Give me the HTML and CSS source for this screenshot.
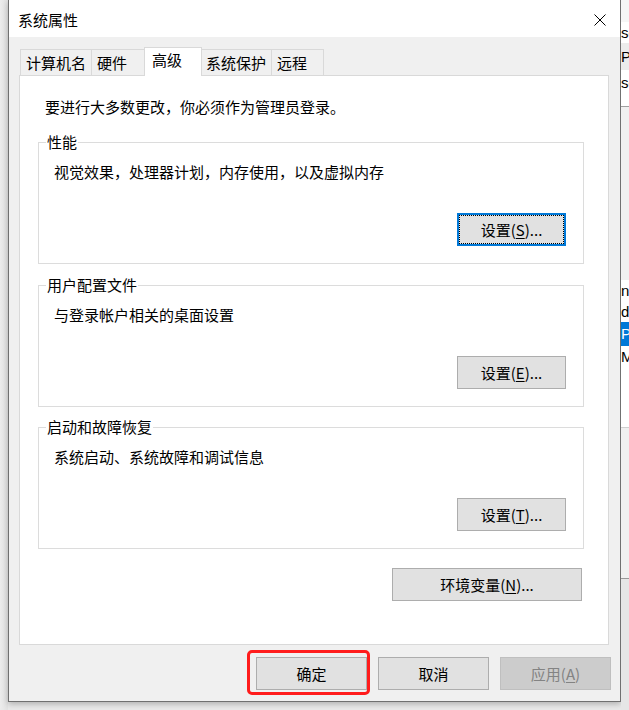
FILE: index.html
```html
<!doctype html>
<html>
	<head>
		<meta charset="utf-8">
		<link rel="stylesheet" href="styles.css">
	</head>
	<body>
		<div class="desk">
			<div class="edge"></div>

			<!-- System properties dialog -->
			<div class="window">
				<div class="titlebar">
					<span class="title">系统属性</span>
					<svg class="close" width="12" height="12" viewBox="0 0 12 12">
						<path d="M0.5 0.5 L11.5 11.5 M11.5 0.5 L0.5 11.5" stroke="#000" stroke-width="1" fill="none"/>
					</svg>
				</div>

				<div class="content">
					<div class="tabs">
						<div class="tab first">计算机名</div>
						<div class="tab prev">硬件</div>
						<div class="tab active">高级</div>
						<div class="tab">系统保护</div>
						<div class="tab">远程</div>
					</div>

					<div class="panel">
						<div class="intro">要进行大多数更改，你必须作为管理员登录。</div>

						<div class="group">
							<span class="legend">性能</span>
							<div class="desc">视觉效果，处理器计划，内存使用，以及虚拟内存</div>
							<div class="actions">
								<button class="btn focus">设置(<u>S</u>)...</button>
							</div>
						</div>

						<div class="group">
							<span class="legend">用户配置文件</span>
							<div class="desc">与登录帐户相关的桌面设置</div>
							<div class="actions">
								<button class="btn">设置(<u>E</u>)...</button>
							</div>
						</div>

						<div class="group last">
							<span class="legend">启动和故障恢复</span>
							<div class="desc">系统启动、系统故障和调试信息</div>
							<div class="actions">
								<button class="btn">设置(<u>T</u>)...</button>
							</div>
						</div>

						<div class="actions env">
							<button class="btn wide">环境变量(<u>N</u>)...</button>
						</div>
					</div>

					<div class="footer">
						<span class="mark"><button class="btn">确定</button></span>
						<button class="btn">取消</button>
						<button class="btn" disabled>应用(<u>A</u>)</button>
					</div>
				</div>
			</div>

			<!-- window behind the dialog, mostly hidden -->
			<div class="behind">
				<div class="b-top"></div>
				<div class="b-line">se</div>
				<div class="b-line shade">Pr</div>
				<div class="b-line tall">se</div>
				<div class="b-gray"></div>
				<div class="b-line">ne</div>
				<div class="b-line">do</div>
				<div class="b-line sel">Pl</div>
				<div class="b-line">M</div>
				<div class="b-white"></div>
				<div class="b-gray2"></div>
				<div class="b-bottom"></div>
			</div>
		</div>
	</body>
</html>
```

FILE: styles.css
```css
body {
	margin: 0;
	background-color: #e9e9e9;
	color: #000;
	font-family: "Noto Sans CJK SC", "Liberation Sans", sans-serif;
	font-size: 15px;
	overflow: hidden;
}
.desk {
	display: flex;
	height: 710px;
}
.edge {
	width: 8px;
	flex: none;
	background: linear-gradient(to right, #ececec, #e2e2e2);
}

/* dialog */
.window {
	width: 613px;
	height: 702px;
	flex: none;
	box-sizing: border-box;
	border: 1px solid #707070;
	border-top: none;
	background-color: #f0f0f0;
	box-shadow: 0 2px 6px rgba(0, 0, 0, 0.25);
	display: flex;
	flex-direction: column;
}
.titlebar {
	height: 37px;
	flex: none;
	background-color: #fff;
	display: flex;
	align-items: center;
	justify-content: space-between;
	padding: 2px 14px 0 9px;
	box-sizing: border-box;
	line-height: 20px;
}
.content {
	padding: 10px 11px 11px 10px;
}

/* tabs */
.tabs {
	display: flex;
	align-items: flex-end;
	padding-left: 1px;
}
.tab {
	height: 26px;
	box-sizing: border-box;
	border-top: 1px solid #d9d9d9;
	border-right: 1px solid #d9d9d9;
	background-color: #f0f0f0;
	line-height: 25px;
	padding-left: 5px;
	white-space: nowrap;
}
.tab.first {
	width: 72px;
	border-left: 1px solid #d9d9d9;
}
.tab.prev {
	width: 52px;
	border-right: none;
}
.tab.active {
	width: 58px;
	height: 29px;
	margin-bottom: -1px;
	border-left: 1px solid #d9d9d9;
	background-color: #fff;
	line-height: 24px;
	padding-left: 7px;
	position: relative;
	z-index: 1;
}
.tab.active + .tab {
	width: 70px;
	padding-left: 4px;
}
.tab:last-child {
	width: 52px;
}

/* tab page */
.panel {
	height: 570px;
	box-sizing: border-box;
	border: 1px solid #d9d9d9;
	background-color: #fff;
	padding-top: 21px;
}
.intro {
	padding-left: 25px;
	line-height: 20px;
}
.group {
	margin: 25px 24px 0 18px;
	border: 1px solid #dcdcdc;
	padding: 0 17px 17px 15px;
}
.group + .group {
	margin-top: 21px;
}
.group.last {
	margin-top: 20px;
}
.legend {
	display: block;
	width: fit-content;
	margin: -11px 0 0 -8px;
	padding: 0 1px;
	background-color: #fff;
	line-height: 20px;
}
.desc {
	margin-top: 10px;
	line-height: 20px;
}
.actions {
	display: flex;
	justify-content: flex-end;
	margin-top: 31px;
}
.actions.env {
	margin: 19px 26px 0 0;
}

/* buttons */
.btn {
	width: 109px;
	height: 33px;
	box-sizing: border-box;
	padding: 0;
	border: 1px solid #adadad;
	border-radius: 0;
	background-color: #e1e1e1;
	color: #000;
	font-family: inherit;
	font-size: 15px;
	line-height: 31px;
	white-space: nowrap;
}
.btn u {
	text-underline-offset: 2px;
}
.btn.focus {
	border: 2px solid #0078d7;
	line-height: 29px;
	outline: 1px dotted #000;
	outline-offset: -3px;
}
.btn.wide {
	width: 190px;
}
.btn:disabled {
	background-color: #cccccc;
	border-color: #bfbfbf;
	color: #838383;
}
.footer {
	display: flex;
	justify-content: flex-end;
	align-items: flex-start;
	gap: 11px;
	margin: 12px -2px 0 0;
}
.footer .btn {
	width: 111px;
}
.mark {
	display: flex;
	border: 3px solid #ff1c1c;
	border-radius: 5px;
	padding: 4px 0 2px 6px;
	margin: -7px -3px -5px -9px;
}

/* the other window peeking out on the right */
.behind {
	flex: 1;
	overflow: hidden;
	display: flex;
	flex-direction: column;
	font-family: "Liberation Sans", sans-serif;
	font-size: 15px;
	white-space: nowrap;
}
.b-top {
	height: 22px;
	background-color: #f6f6f6;
}
.b-line {
	height: 21px;
	line-height: 21px;
	background-color: #fff;
	margin-left: -1px;
	padding-left: 1px;
}
.b-line.shade {
	height: 27px;
	line-height: 27px;
	background-color: #ececec;
}
.b-line.tall {
	height: 36px;
	line-height: 26px;
	border-bottom: 1px solid #a0a0a0;
}
.b-line.sel {
	height: 24px;
	line-height: 24px;
	background-color: #0078d7;
	color: #fff;
}
.b-gray {
	height: 173px;
	background-color: #f0f0f0;
}
.b-white {
	height: 60px;
	background-color: #fff;
}
.b-gray2 {
	height: 150px;
	background-color: #f0f0f0;
	border-top: 1px solid #d0d0d0;
	border-bottom: 1px solid #999;
}
.b-bottom {
	flex: 1;
	background-color: #e6e6e6;
}
```
